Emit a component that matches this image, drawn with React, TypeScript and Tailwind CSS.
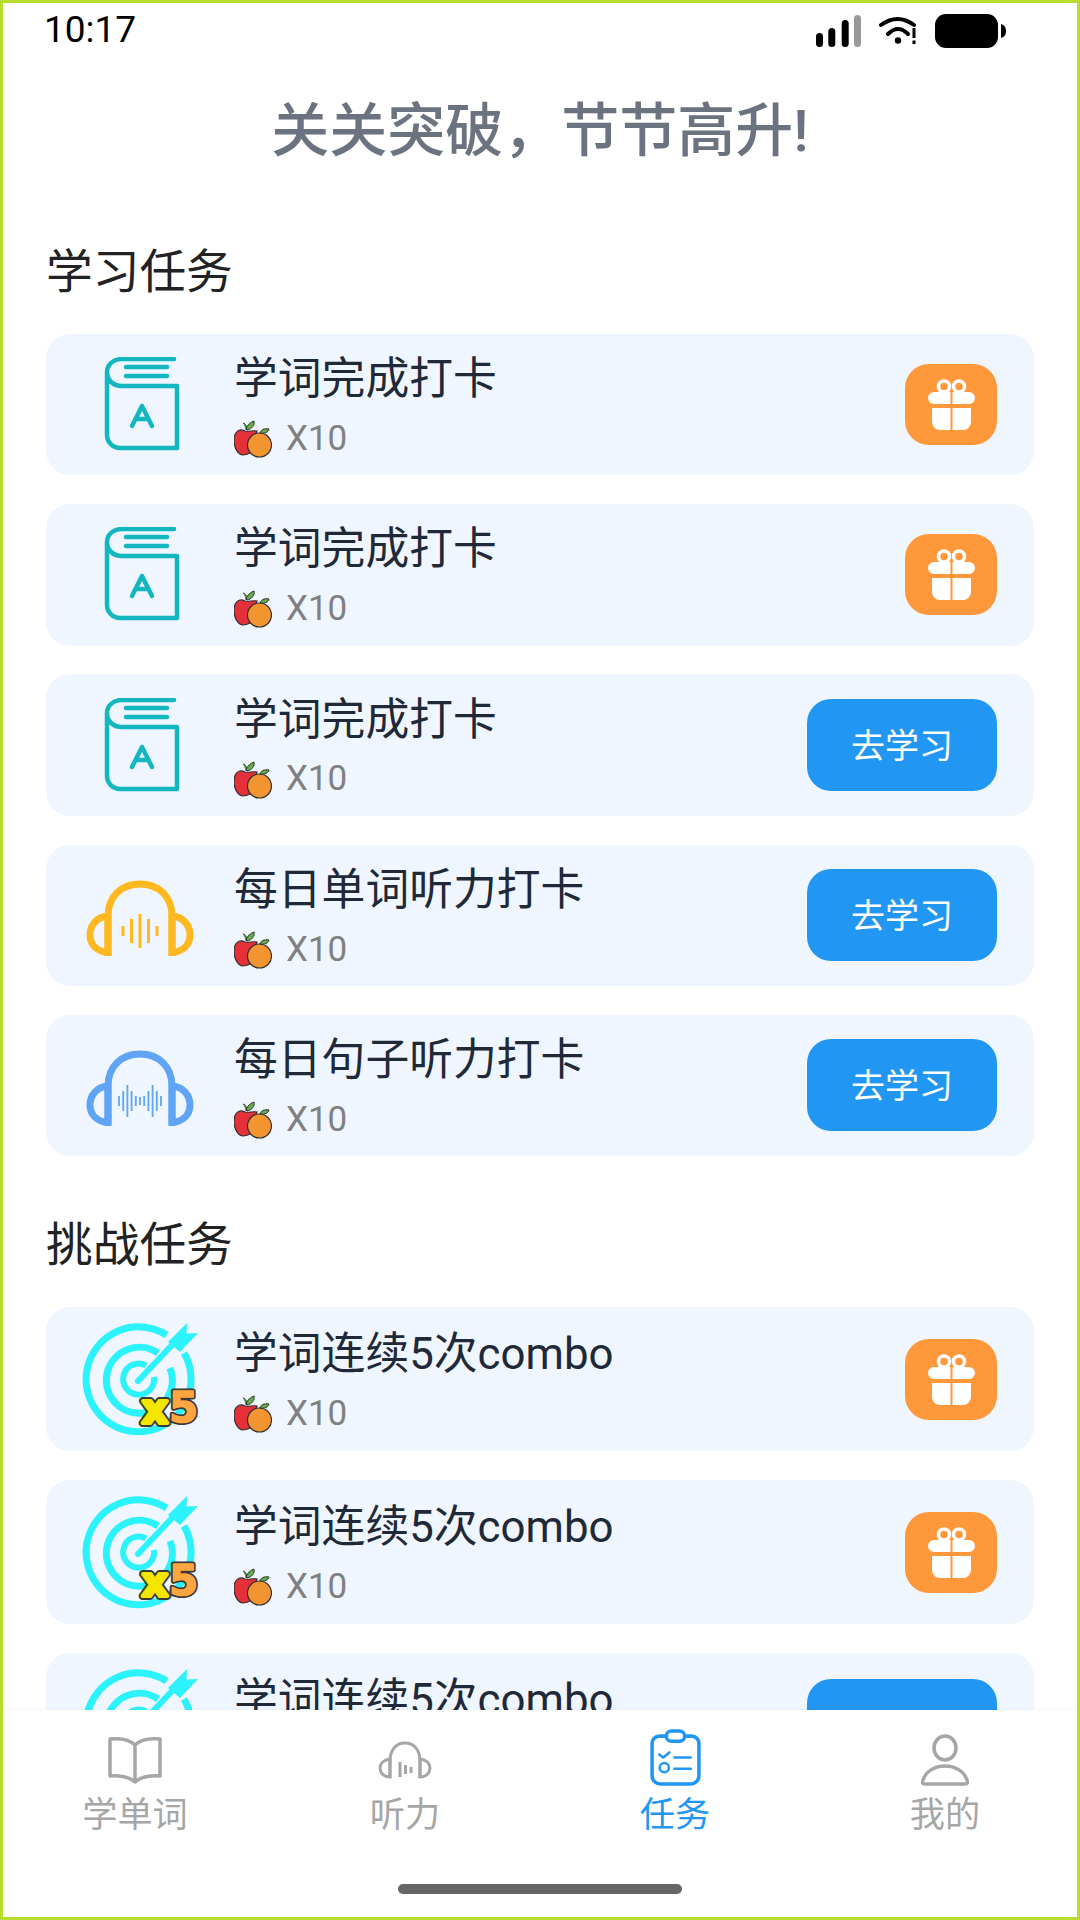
const cjk = "font-['Roboto','Noto_Sans_CJK_SC',sans-serif]"

function BookIcon() {
  return (
    <svg width="78" height="95" viewBox="0 0 78 95" fill="none" stroke="#14b6c0" strokeWidth="4.500" strokeLinecap="round" strokeLinejoin="round" className="ml-[3px]">
      <path d="M71 2H19C10 2 4 8 4 15v63a13 13 0 0 0 13 13h57V29H19C10 29 4 23 4 15" />
      <path d="M23 10h41M23 19h41" />
      <path d="M29 69l10-20 10 20M32.500 62h13" />
    </svg>
  )
}

function PhoneIcon({ color, bars, step, barWidth }: { color: string; bars: number[]; step: number; barWidth: number }) {
  const start = 54 - ((bars.length - 1) * step) / 2
  return (
    <svg width="108" height="76" viewBox="0 0 108 76" fill="none">
      <path d="M22 75V36C22 16 36 4 54 4s32 12 32 32v39" stroke={color} strokeWidth="7" />
      <path d="M22 36C10 37 4 46 4 55s6 16 18 18z" stroke={color} strokeWidth="7" />
      <path d="M86 36c12 1 18 10 18 19s-6 16-18 18z" stroke={color} strokeWidth="7" />
      {bars.map((h, i) => (
        <line key={i} x1={start + i * step} x2={start + i * step} y1={51 - h / 2} y2={51 + h / 2} stroke={color} strokeWidth={barWidth} />
      ))}
    </svg>
  )
}

function TargetIcon() {
  const c = "#2cf2fb"
  const badgeFont = "'DejaVu Sans',sans-serif"
  return (
    <svg width="115" height="108" viewBox="0 0 115 108" fill="none" className="overflow-visible">
      <path d="M83.700 13A52.500 52.500 0 1 0 101 31" stroke={c} strokeWidth="7" />
      <path d="M75 31A33 33 0 1 0 87 46" stroke={c} strokeWidth="7" />
      <path d="M63 43.500A15.500 15.500 0 1 0 71 55" stroke={c} strokeWidth="6" />
      <path d="M55 59L90 22" stroke={c} strokeWidth="6" strokeLinecap="round" />
      <path d="M85 20L104 1l-.5 10.500L115 11 97 30z" fill={c} />
      <g fontFamily={badgeFont} fontWeight="700" strokeLinejoin="round">
        <text x="59" y="101" fontSize="40" stroke="#3a3a3a" strokeWidth="8">x</text>
        <text x="59" y="101" fontSize="40" fill="#f5e600" stroke="#f5e600" strokeWidth="4">x</text>
        <text x="86" y="100" fontSize="42" stroke="#3a3a3a" strokeWidth="5">5</text>
        <text x="86" y="100" fontSize="42" fill="#ffa640" stroke="#ffa640" strokeWidth="1.500">5</text>
      </g>
    </svg>
  )
}

function FruitIcon() {
  return (
    <svg width="38" height="38" viewBox="0 0 38 38">
      <path d="M12 10c1-4 0-6-3-7M12 9c1-4 5-7 8-8 1 4-2 8-7 9z" fill="#62b04a" stroke="#2f2f2f" strokeWidth="1" />
      <path d="M11 11c-6-3-11 1-11 9 0 9 5 15 9 15 3 0 5-1 7-2l7-22c-4-1-8 1-12 0z" fill="#e5303a" stroke="#2f2f2f" strokeWidth="1.2" />
      <circle cx="25.500" cy="25" r="12" fill="#f29530" stroke="#2f2f2f" strokeWidth="1.2" />
      <path d="M26 13c1-3 4-5 9-4-1 3-4 5-9 4z" fill="#62b04a" stroke="#2f2f2f" strokeWidth="1" />
    </svg>
  )
}

function GiftIcon() {
  return (
    <svg width="47" height="51" viewBox="0 0 47 51" fill="none">
      <circle cx="16" cy="7.500" r="5.500" stroke="#fff" strokeWidth="3.500" />
      <circle cx="31" cy="7.500" r="5.500" stroke="#fff" strokeWidth="3.500" />
      <path d="M6 13h16.500v12H6a6 6 0 0 1 0-12zM24.500 13H41a6 6 0 0 1 0 12H24.500z" fill="#fff" />
      <path d="M4 29h18.500v22H12a8 8 0 0 1-8-8zM24.500 29H43v14a8 8 0 0 1-8 8H24.500z" fill="#fff" />
    </svg>
  )
}

function TaskCard({ icon, title, action, tall }: { icon: React.ReactNode; title: string; action: "gift" | "study"; tall?: boolean }) {
  return (
    <div className={`flex items-center bg-[#eff6ff] rounded-[24px] pr-[37px] shrink-0 ${tall ? "h-[144px]" : "h-[141.4px]"}`}>
      <div className={`w-[188px] flex justify-center shrink-0 ${tall ? "pb-[6px]" : ""}`}>{icon}</div>
      <div className={`flex-1 ${tall ? "pt-[1px]" : ""}`}>
        <div className="text-[43.800px] leading-[50px] text-[#1f2937] pt-[3px]">{title}</div>
        <div className="flex items-center gap-[14px] h-[38px] mt-[16px]">
          <FruitIcon />
          <span className="text-[35px] text-[#808080]">X10</span>
        </div>
      </div>
      {action === "gift" ? (
        <div className="w-[92px] h-[81px] rounded-[24px] bg-[#ff983a] flex items-center justify-center">
          <GiftIcon />
        </div>
      ) : (
        <div className={`w-[190px] h-[92px] rounded-[24px] bg-[#2196f3] flex items-center justify-center text-[34px] text-white ${tall ? "pt-[9px]" : "pt-[3px]"}`}>去学习</div>
      )}
    </div>
  )
}

function NavItem({ label, active, icon }: { label: string; active?: boolean; icon: React.ReactNode }) {
  return (
    <div className={`flex flex-col items-center ${active ? "text-[#2196f3]" : "text-[#a6a6a6]"}`}>
      <div className="h-[60px] flex items-center justify-center">{icon}</div>
      <span className="text-[35.200px] leading-[40px] mt-[5px]">{label}</span>
    </div>
  )
}

export default function App() {
  const yellowBars = [10, 24, 34, 24, 10]
  const blueBars = [10, 20, 32, 20, 10, 8, 10, 20, 32, 20, 10]
  const yellowPhones = <div className="mt-[5px]"><PhoneIcon color="#ffb81f" bars={yellowBars} step={8.500} barWidth={3} /></div>
  const bluePhones = <div className="mt-[5px]"><PhoneIcon color="#60a5f5" bars={blueBars} step={4.200} barWidth={1.800} /></div>

  return (
    <div className={`relative w-[1080px] h-[1920px] bg-white overflow-hidden flex flex-col ${cjk}`}>
      <div className="flex items-center justify-between h-[60px] pl-[44px] pr-[73px] shrink-0">
        <span className="text-[37px] text-black leading-[60px]">10:17</span>
        <div className="flex items-center gap-[18px] mt-[2px]">
          <svg width="45" height="32" viewBox="0 0 45 32">
            <rect x="0" y="18" width="7" height="14" rx="3.500" fill="#000" />
            <rect x="12.300" y="13" width="7" height="19" rx="3.500" fill="#000" />
            <rect x="25.700" y="5" width="7" height="27" rx="3.500" fill="#000" />
            <rect x="38" y="0" width="7" height="32" rx="3.500" fill="#999" />
          </svg>
          <svg width="38" height="30" viewBox="0 0 38 30" fill="none">
            <path d="M2 9Q18.500-3 35 9" stroke="#000" strokeWidth="4" strokeLinecap="round" />
            <path d="M9 18Q19 8 29 18" stroke="#000" strokeWidth="4" strokeLinecap="round" />
            <circle cx="19" cy="24.500" r="3.200" fill="#000" />
            <rect x="33.500" y="12" width="3" height="10" fill="#000" />
            <rect x="33.500" y="24.500" width="3" height="3.500" fill="#000" />
          </svg>
          <svg width="72" height="34" viewBox="0 0 72 34">
            <rect x="0" y="0" width="63" height="34" rx="11" fill="#000" />
            <path d="M66 10c3 1 5 3 5 7s-2 6-5 7z" fill="#000" />
          </svg>
        </div>
      </div>

      <h1 className="text-center text-[58px] leading-[70px] font-medium text-[#6b7280] mt-[36px] shrink-0">关关突破，节节高升!</h1>

      <div className="flex-1 overflow-hidden px-[46px]">
        <h2 className="text-[46.700px] leading-[60px] text-[#222222] mt-[76px] mb-[32px]">学习任务</h2>
        <div className="flex flex-col gap-[28.800px]">
          <TaskCard icon={<BookIcon />} title="学词完成打卡" action="gift" />
          <TaskCard icon={<BookIcon />} title="学词完成打卡" action="gift" />
          <TaskCard icon={<BookIcon />} title="学词完成打卡" action="study" />
          <TaskCard icon={yellowPhones} title="每日单词听力打卡" action="study" />
          <TaskCard icon={bluePhones} title="每日句子听力打卡" action="study" />
        </div>

        <h2 className="text-[46.700px] leading-[60px] text-[#222222] mt-[59px] mb-[32px]">挑战任务</h2>
        <div className="flex flex-col gap-[29px]">
          <TaskCard tall icon={<TargetIcon />} title="学词连续5次combo" action="gift" />
          <TaskCard tall icon={<TargetIcon />} title="学词连续5次combo" action="gift" />
          <TaskCard tall icon={<TargetIcon />} title="学词连续5次combo" action="study" />
        </div>
      </div>

      <div className="relative h-[210px] shrink-0 bg-white pt-[20px] shadow-[0_-1px_3px_rgba(0,0,0,0.03)]">
        <div className="grid grid-cols-4">
          <NavItem
            label="学单词"
            icon={
              <svg width="54" height="48" viewBox="0 0 54 48" fill="none" stroke="currentColor" strokeWidth="3.500" strokeLinejoin="round">
                <path d="M27 9C21 3 11 2 2 3v37c9-1 18 0 25 6 7-6 16-7 25-6V3c-9-1-19 0-25 6zM27 9v36" />
              </svg>
            }
          />
          <NavItem
            label="听力"
            icon={
              <svg width="54" height="38" viewBox="0 0 54 38" fill="none" stroke="currentColor" strokeWidth="3">
                <path d="M12 37V20C12 9 18 2 27 2s15 7 15 18v17" />
                <path d="M12 18C5 19 2 23 2 27s3 9 10 9zM42 18c7 1 10 5 10 9s-3 9-10 9z" />
                <path d="M22 21v15M27.500 24v9M33 26v6" />
              </svg>
            }
          />
          <NavItem
            label="任务"
            active
            icon={
              <svg width="51" height="57" viewBox="0 0 50 56" fill="none" stroke="currentColor" strokeWidth="3.500" strokeLinecap="round" strokeLinejoin="round" className="mb-[5px]">
                <path d="M16 7H9a7 7 0 0 0-7 7v32a8 8 0 0 0 8 8h30a8 8 0 0 0 8-8V14a7 7 0 0 0-7-7h-7" />
                <rect x="16" y="2" width="18" height="10" rx="5" />
                <path d="M9 25l4 3 6-5M24 28h16M24 39h16" strokeWidth="2.500" />
                <circle cx="14" cy="38" r="4.500" strokeWidth="2.500" />
              </svg>
            }
          />
          <NavItem
            label="我的"
            icon={
              <svg width="48" height="52" viewBox="0 0 48 52" fill="none" stroke="currentColor" strokeWidth="3.500" strokeLinejoin="round">
                <ellipse cx="24" cy="14" rx="11" ry="12" />
                <path d="M4 50c-3 0-3-2-2-4 3-9 12-14 22-14s19 5 22 14c1 2 1 4-2 4z" />
              </svg>
            }
          />
        </div>
        <div className="absolute left-[398px] top-[174px] w-[284px] h-[10px] rounded-full bg-[#666666]" />
      </div>

      <div className="pointer-events-none absolute inset-0 border-[3px] border-[#b5dc2f]" />
    </div>
  )
}
